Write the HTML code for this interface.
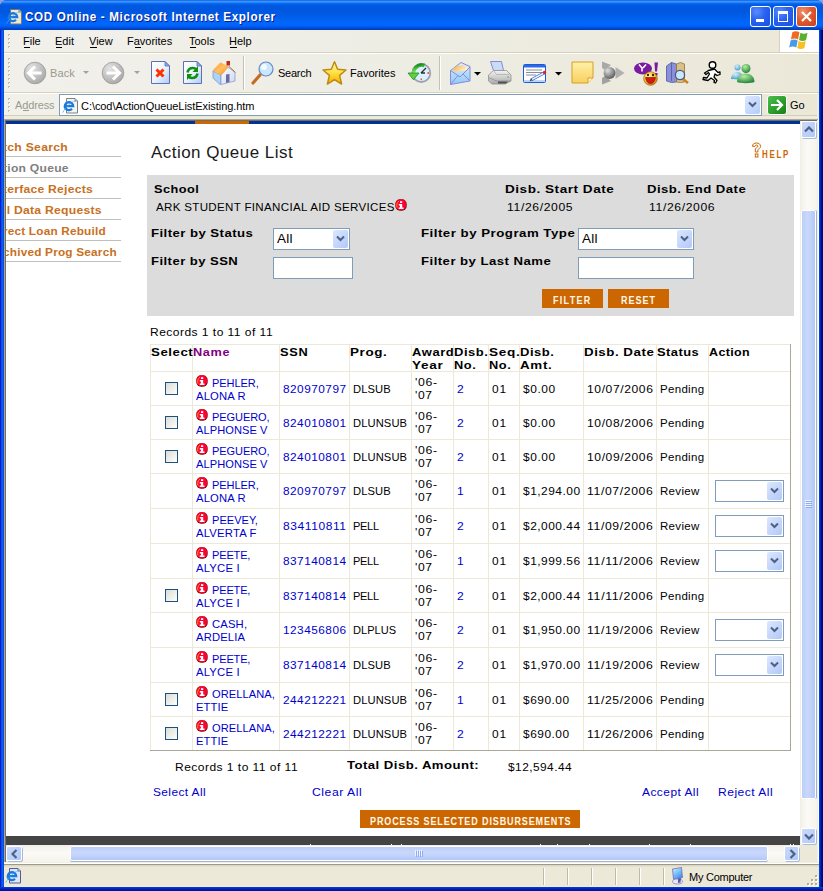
<!DOCTYPE html><html><head><meta charset="utf-8"><style>
html,body{margin:0;padding:0;}
body{width:823px;height:891px;overflow:hidden;position:relative;background:#8ca0e0;font-family:"Liberation Sans",sans-serif;}
.t{position:absolute;white-space:nowrap;line-height:20px;font-family:"Liberation Sans",sans-serif;}
.a{position:absolute;}
</style></head><body>
<div style="position:absolute;left:0px;top:0px;width:823px;height:891px;background:linear-gradient(to right,#0010d0 0,#0828d8 1px,#166ef0 2px,#0050e0 3px,#0050e0 819px,#0048f0 819px,#0038d8 820px,#001890 821px,#000880 822px);border-radius:7px 7px 0 0;"></div>
<div style="position:absolute;left:0px;top:0px;width:823px;height:30px;border-radius:7px 7px 0 0;background:linear-gradient(to bottom,#0046d8 0px,#3b95ff 1px,#3b95ff 2px,#0a74f8 3px,#0560e8 4px,#0058e0 6px,#0058e0 12px,#005ce8 16px,#0064f4 20px,#0066ff 24px,#0062f8 26px,#004ed8 28px,#0040c0 29px,#0040c0 30px);"></div>
<div style="position:absolute;left:0px;top:887px;width:823px;height:4px;background:linear-gradient(to bottom,#0040e0,#0020b8 2px,#000c90 4px);"></div>
<svg class="a" style="left:6px;top:8px" width="17" height="17" viewBox="0 0 17 17">
<path d="M4.5 1.5h8.5l2.5 2.5v12h-11z" fill="#ece9d8" stroke="#7a7866" stroke-width="1"/>
<path d="M13 1.5v2.5h2.5" fill="#b8d0f8" stroke="#7a7866" stroke-width="0.8"/>
<path d="M2.8 9.2H11.2A4.2 3.9 0 1 0 10 11.9" fill="none" stroke="#1a78e0" stroke-width="2.3"/>
<path d="M0.8 15.5c2.5-5 8-10 13-12" stroke="#38a8f0" stroke-width="1" fill="none" stroke-dasharray="1.5 0.8"/>
</svg>
<span class="t" style="left:25px;top:7px;font-size:13px;font-weight:bold;color:#fff;text-shadow:1px 1px 0 #0a1a90;letter-spacing:0.7px;transform:scaleX(0.9);transform-origin:0 0">COD Online - Microsoft Internet Explorer</span>
<div class="a" style="left:750px;top:6px;width:19px;height:19px;border:1px solid #fff;border-radius:3px;background:radial-gradient(circle at 30% 25%,#5a8cff 0,#2a62f0 45%,#1a4ee0 100%);overflow:hidden"><div class="a" style="left:5px;top:12px;width:8px;height:3px;background:#fff"></div></div>
<div class="a" style="left:773px;top:6px;width:19px;height:19px;border:1px solid #fff;border-radius:3px;background:radial-gradient(circle at 30% 25%,#5a8cff 0,#2a62f0 45%,#1a4ee0 100%);overflow:hidden"><div class="a" style="left:4px;top:4px;width:8px;height:7px;border:1px solid #fff;border-top:3px solid #fff"></div></div>
<div class="a" style="left:796px;top:6px;width:19px;height:19px;border:1px solid #fff;border-radius:3px;background:radial-gradient(circle at 30% 25%,#f09070 0,#e05a30 45%,#c8401a 100%);overflow:hidden"><svg class="a" style="left:0;top:0" width="19" height="19"><path d="M5 5L14 14M14 5L5 14" stroke="#fff" stroke-width="2.2"/></svg></div>
<div style="position:absolute;left:4px;top:30px;width:815px;height:22px;background:linear-gradient(to right,#f1f0eb 0,#eeede4 50%,#ebe8d8 100%);"></div>
<div style="position:absolute;left:4px;top:52px;width:815px;height:1px;background:#d8d0b8;"></div>
<div style="position:absolute;left:4px;top:53px;width:815px;height:1px;background:#ffffff;"></div>
<div style="position:absolute;left:780px;top:30px;width:39px;height:22px;background:#fff;"></div>
<div style="position:absolute;left:779px;top:30px;width:1px;height:22px;background:#d6d2c2;"></div>
<svg class="a" style="left:788px;top:30px" width="24" height="21" viewBox="0 0 22 19">
<path d="M4 2c2-1.2 4.5-1.2 6.5 0l-1.3 6.5c-2-1.2-4.5-1.2-6.5 0z" fill="#f06a22"/>
<path d="M11.4 2.5c2 1.2 4.5 1.2 6.5 0l-1.3 6.5c-2 1.2-4.5 1.2-6.5 0z" fill="#58b030"/>
<path d="M2.4 9.4c2-1.2 4.5-1.2 6.5 0l-1.3 6.5c-2-1.2-4.5-1.2-6.5 0z" fill="#4a9ae8"/>
<path d="M9.8 9.9c2 1.2 4.5 1.2 6.5 0l-1.3 6.5c-2 1.2-4.5 1.2-6.5 0z" fill="#f8c020"/>
</svg>
<div style="position:absolute;left:8px;top:34px;width:2px;height:2px;background:#c3bfae;"></div>
<div style="position:absolute;left:9px;top:35px;width:1px;height:1px;background:#fff;"></div>
<div style="position:absolute;left:8px;top:38px;width:2px;height:2px;background:#c3bfae;"></div>
<div style="position:absolute;left:9px;top:39px;width:1px;height:1px;background:#fff;"></div>
<div style="position:absolute;left:8px;top:42px;width:2px;height:2px;background:#c3bfae;"></div>
<div style="position:absolute;left:9px;top:43px;width:1px;height:1px;background:#fff;"></div>
<div style="position:absolute;left:8px;top:46px;width:2px;height:2px;background:#c3bfae;"></div>
<div style="position:absolute;left:9px;top:47px;width:1px;height:1px;background:#fff;"></div>
<span id="t0" class="t " style="left:23px;top:31px;font-size:11px;color:#000;letter-spacing:0.00px;">File</span>
<span id="t1" class="t " style="left:55px;top:31px;font-size:11px;color:#000;letter-spacing:0.00px;">Edit</span>
<span id="t2" class="t " style="left:89px;top:31px;font-size:11px;color:#000;letter-spacing:0.00px;">View</span>
<span id="t3" class="t " style="left:127px;top:31px;font-size:11px;color:#000;letter-spacing:0.00px;">Favorites</span>
<span id="t4" class="t " style="left:189px;top:31px;font-size:11px;color:#000;letter-spacing:0.00px;">Tools</span>
<span id="t5" class="t " style="left:229px;top:31px;font-size:11px;color:#000;letter-spacing:0.00px;">Help</span>
<div style="position:absolute;left:24px;top:47px;width:6px;height:1px;background:#000;"></div>
<div style="position:absolute;left:56px;top:47px;width:6px;height:1px;background:#000;"></div>
<div style="position:absolute;left:90px;top:47px;width:7px;height:1px;background:#000;"></div>
<div style="position:absolute;left:135px;top:47px;width:6px;height:1px;background:#000;"></div>
<div style="position:absolute;left:190px;top:47px;width:6px;height:1px;background:#000;"></div>
<div style="position:absolute;left:230px;top:47px;width:7px;height:1px;background:#000;"></div>
<div style="position:absolute;left:4px;top:54px;width:815px;height:38px;background:linear-gradient(to right,#f1f0eb 0,#eeede4 50%,#ebe8d8 100%);"></div>
<div style="position:absolute;left:4px;top:92px;width:815px;height:1px;background:#d8d0b8;"></div>
<div style="position:absolute;left:4px;top:93px;width:815px;height:1px;background:#fff;"></div>
<div style="position:absolute;left:8px;top:58px;width:2px;height:2px;background:#c3bfae;"></div>
<div style="position:absolute;left:9px;top:59px;width:1px;height:1px;background:#fff;"></div>
<div style="position:absolute;left:8px;top:62px;width:2px;height:2px;background:#c3bfae;"></div>
<div style="position:absolute;left:9px;top:63px;width:1px;height:1px;background:#fff;"></div>
<div style="position:absolute;left:8px;top:66px;width:2px;height:2px;background:#c3bfae;"></div>
<div style="position:absolute;left:9px;top:67px;width:1px;height:1px;background:#fff;"></div>
<div style="position:absolute;left:8px;top:70px;width:2px;height:2px;background:#c3bfae;"></div>
<div style="position:absolute;left:9px;top:71px;width:1px;height:1px;background:#fff;"></div>
<div style="position:absolute;left:8px;top:74px;width:2px;height:2px;background:#c3bfae;"></div>
<div style="position:absolute;left:9px;top:75px;width:1px;height:1px;background:#fff;"></div>
<div style="position:absolute;left:8px;top:78px;width:2px;height:2px;background:#c3bfae;"></div>
<div style="position:absolute;left:9px;top:79px;width:1px;height:1px;background:#fff;"></div>
<div style="position:absolute;left:8px;top:82px;width:2px;height:2px;background:#c3bfae;"></div>
<div style="position:absolute;left:9px;top:83px;width:1px;height:1px;background:#fff;"></div>
<div style="position:absolute;left:8px;top:86px;width:2px;height:2px;background:#c3bfae;"></div>
<div style="position:absolute;left:9px;top:87px;width:1px;height:1px;background:#fff;"></div>
<svg class="a" style="left:23px;top:61px" width="24" height="24" viewBox="0 0 24 24">
<defs><radialGradient id="gb" cx="35%" cy="30%" r="75%"><stop offset="0" stop-color="#e4e4e4"/><stop offset="0.6" stop-color="#c0c0c0"/><stop offset="1" stop-color="#a8a8a8"/></radialGradient></defs>
<circle cx="12" cy="12" r="10.8" fill="url(#gb)" stroke="#9a9a9a" stroke-width="0.8"/>
<path d="M6 12h12.5M12 5.5L5.5 12L12 18.5" stroke="#fff" stroke-width="3" fill="none" stroke-linejoin="miter"/>
</svg>
<svg class="a" style="left:101px;top:61px" width="24" height="24" viewBox="0 0 24 24">
<circle cx="12" cy="12" r="10.8" fill="url(#gb)" stroke="#9a9a9a" stroke-width="0.8"/>
<path d="M18 12H5.5M12 5.5L18.5 12L12 18.5" stroke="#fff" stroke-width="3" fill="none"/>
</svg>
<span id="t6" class="t " style="left:50px;top:63px;font-size:11px;color:#9c9a8c;letter-spacing:0.10px;">Back</span>
<svg class="a" style="left:83px;top:71px" width="6" height="4"><path d="M0 0h6L3 3z" fill="#a0a0a0"/></svg>
<svg class="a" style="left:134px;top:71px" width="6" height="4"><path d="M0 0h6L3 3z" fill="#a0a0a0"/></svg>
<svg class="a" style="left:151px;top:61px" width="20" height="24" viewBox="0 0 20 24">
<defs><linearGradient id="gd" x1="0" y1="0" x2="1" y2="1"><stop offset="0" stop-color="#ffffff"/><stop offset="0.5" stop-color="#eef4ff"/><stop offset="1" stop-color="#a8ccf8"/></linearGradient></defs>
<path d="M0.5 0.5h13.5l4.5 4.5v17.5h-18z" fill="url(#gd)" stroke="#6270b0" stroke-width="1"/><path d="M14 0.5v4.5h4.5z" fill="#7ab0f0" stroke="#6270b0" stroke-width="0.8"/><path d="M5.5 8.5L12.5 15.5M12.5 8.5L5.5 15.5" stroke="#ff3000" stroke-width="3"/></svg>
<svg class="a" style="left:183px;top:61px" width="20" height="24" viewBox="0 0 20 24">
<path d="M0.5 0.5h13.5l4.5 4.5v17.5h-18z" fill="url(#gd)" stroke="#6270b0" stroke-width="1"/><path d="M14 0.5v4.5h4.5z" fill="#7ab0f0" stroke="#6270b0" stroke-width="0.8"/><path d="M4.5 11.5c0.5-3 3-4.5 5.5-4.5c1.5 0 2.5 0.5 3.5 1.5" stroke="#109010" stroke-width="2.6" fill="none"/><path d="M15 5v6h-5.5z" fill="#109010"/>
<path d="M14.5 12.5c-0.5 3-3 4.5-5.5 4.5c-1.5 0-2.5-0.5-3.5-1.5" stroke="#109010" stroke-width="2.6" fill="none"/><path d="M4 19v-6h5.5z" fill="#109010"/></svg>
<svg class="a" style="left:208px;top:58px" width="32" height="30" viewBox="0 0 32 30">
<defs><linearGradient id="gr" x1="0" y1="0" x2="1" y2="1"><stop offset="0" stop-color="#ff9428"/><stop offset="0.5" stop-color="#ffc060"/><stop offset="1" stop-color="#f08a20"/></linearGradient>
<linearGradient id="gw" x1="0" y1="0" x2="1" y2="1"><stop offset="0" stop-color="#ffffff"/><stop offset="1" stop-color="#c8d8f0"/></linearGradient></defs>
<path d="M5 13L13 17L13 26L12 26.5L5 20z" fill="#a8d4fa" stroke="#7a8ac8" stroke-width="0.7"/>
<path d="M13 17L20 9L27 14.5L27 23L13 26.5z" fill="url(#gw)" stroke="#8a90c8" stroke-width="0.7"/>
<path d="M18 16.5L21.5 16L21.5 24L18 25z" fill="#6a6aa8"/>
<path d="M4.5 12.5L12.5 4.5L21 8.5L13 17.5z" fill="url(#gr)"/>
<path d="M21 8.5L27.5 14.5" stroke="#b07050" stroke-width="1"/>
<rect x="18.5" y="3" width="3.5" height="4.5" fill="#c02818"/>
</svg>
<div style="position:absolute;left:243px;top:56px;width:1px;height:34px;background:#c5c2b2;"></div>
<div style="position:absolute;left:244px;top:56px;width:1px;height:34px;background:#fff;"></div>
<svg class="a" style="left:250px;top:61px" width="26" height="24" viewBox="0 0 26 24">
<path d="M3 22L10 14" stroke="#c86a20" stroke-width="3.2" stroke-linecap="round"/>
<circle cx="16" cy="8" r="7" fill="#c8e8ff" stroke="#6a86c0" stroke-width="1.2"/>
<circle cx="14" cy="6" r="3" fill="#ffffff" opacity="0.8"/>
</svg>
<span id="t7" class="t " style="left:278px;top:63px;font-size:11px;color:#000;letter-spacing:-0.27px;">Search</span>
<svg class="a" style="left:321px;top:60px" width="27" height="26" viewBox="0 0 27 26">
<defs><linearGradient id="gs" x1="0" y1="0" x2="0" y2="1"><stop offset="0" stop-color="#fffcc0"/><stop offset="0.5" stop-color="#ffe040"/><stop offset="1" stop-color="#f0b000"/></linearGradient></defs>
<path d="M13.5 1.8L16.6 9.3L25 10L18.6 15.4L20.6 24L13.5 19.6L6.4 24L8.4 15.4L2 10L10.4 9.3z" fill="url(#gs)" stroke="#c08a10" stroke-width="1.5" stroke-linejoin="round"/>
</svg>
<span id="t8" class="t " style="left:350px;top:63px;font-size:11px;color:#000;letter-spacing:0.02px;transform:scaleX(1.0029);transform-origin:0 0;">Favorites</span>
<svg class="a" style="left:404px;top:58px" width="32" height="30" viewBox="404 58 32 30">
<defs><linearGradient id="gh" x1="0" y1="0" x2="0.3" y2="1"><stop offset="0" stop-color="#108a10"/><stop offset="1" stop-color="#90f070"/></linearGradient></defs>
<circle cx="421.3" cy="73" r="9" fill="#d8f0ff" stroke="#a0a0b0" stroke-width="1.8"/>
<path d="M421 73l5-5M421 73h4" stroke="#303030" stroke-width="1.4"/>
<rect x="427.5" y="72" width="1.4" height="2" fill="#f05020"/><rect x="420.6" y="78.5" width="1.4" height="1.6" fill="#f05020"/>
<path d="M424.5 65.5c-5-1.5-10 1-11 7" stroke="url(#gh)" stroke-width="3.6" fill="none"/>
<path d="M408 73h11l-5.5 6.8z" fill="#60d040" stroke="#108010" stroke-width="0.7"/>
</svg>
<div style="position:absolute;left:439px;top:56px;width:1px;height:34px;background:#c5c2b2;"></div>
<div style="position:absolute;left:440px;top:56px;width:1px;height:34px;background:#fff;"></div>
<svg class="a" style="left:444px;top:56px" width="32" height="32" viewBox="444 56 32 32">
<defs><linearGradient id="gm" x1="0" y1="0" x2="0" y2="1"><stop offset="0" stop-color="#d8f0ff"/><stop offset="1" stop-color="#90c8f8"/></linearGradient>
<linearGradient id="gl" x1="0" y1="0" x2="1" y2="0.4"><stop offset="0" stop-color="#f8b040"/><stop offset="1" stop-color="#fff0d0"/></linearGradient></defs>
<path d="M450.5 70.5L461 62.5L470 66.5L470 81L450.5 84.5z" fill="url(#gm)" stroke="#8a8ad8" stroke-width="1"/>
<path d="M453 68.5c3-3 10-4 15-1.5l-1 3c-4 1-10 1.5-13 1.5z" fill="url(#gl)"/>
<path d="M450.5 70.5L460 77L470 67M450.5 84.5L458 75.5M470 81L463 74" stroke="#8a8ad8" stroke-width="1" fill="none"/>
</svg>
<svg class="a" style="left:474px;top:72px" width="7" height="4"><path d="M0 0h7L3.5 3.5z" fill="#000"/></svg>
<svg class="a" style="left:486px;top:58px" width="28" height="30" viewBox="486 58 28 30">
<defs><linearGradient id="gp" x1="0" y1="0" x2="0" y2="1"><stop offset="0" stop-color="#f4f4f4"/><stop offset="1" stop-color="#a8a8a8"/></linearGradient></defs>
<path d="M490.5 61.5h11l2 9h-10z" fill="#c8dcf8" stroke="#8a8ad0" stroke-width="1"/>
<path d="M488.5 75l5-4.5h13l4.5 4.5v6l-6 3h-13l-3.5-3z" fill="url(#gp)" stroke="#909090" stroke-width="0.8"/>
<path d="M493.5 70.5l3 4h13" stroke="#b0b0b0" stroke-width="0.8" fill="none"/>
<path d="M488.5 77.5l8 3.5h14" stroke="#909090" stroke-width="0.8" fill="none"/>
<path d="M498 81.5h10l-2 2h-8z" fill="#505050"/><circle cx="508" cy="77" r="0.8" fill="#30c030"/>
</svg>
<svg class="a" style="left:518px;top:58px" width="32" height="30" viewBox="518 58 32 30">
<rect x="523.5" y="64.5" width="22" height="18" rx="1" fill="#fff" stroke="#1c5ad8" stroke-width="1"/>
<path d="M524 65h21v2.5h-21z" fill="#2a6ae8"/>
<path d="M524 80h21v2h-21z" fill="#b8d8f8"/>
<path d="M526 70h16M526 72.5h16M526 75h10" stroke="#8a8a9a" stroke-width="1"/>
<path d="M531 80l13-7" stroke="#1a5ad0" stroke-width="3"/><path d="M531 80l13-7" stroke="#e8f0ff" stroke-width="1.6"/>
<path d="M529.5 81.5l1.5-3l1.5 1.5z" fill="#403020"/><circle cx="544.5" cy="72.5" r="1.7" fill="#e02818"/>
</svg>
<svg class="a" style="left:555px;top:72px" width="7" height="4"><path d="M0 0h7L3.5 3.5z" fill="#000"/></svg>
<svg class="a" style="left:571px;top:61px" width="23" height="23" viewBox="0 0 23 23">
<defs><linearGradient id="gn" x1="0" y1="0" x2="0" y2="1"><stop offset="0" stop-color="#fff0a8"/><stop offset="1" stop-color="#f8d060"/></linearGradient></defs>
<path d="M1 1h21v16l-5 5h-16z" fill="url(#gn)" stroke="#d8a020" stroke-width="1"/>
<path d="M17 22v-5h5" fill="#fff8d0" stroke="#d8a020" stroke-width="1"/>
</svg>
<svg class="a" style="left:598px;top:58px" width="30" height="30" viewBox="598 58 30 30">
<defs><radialGradient id="gg2" cx="35%" cy="30%" r="70%"><stop offset="0" stop-color="#e0e0e0"/><stop offset="1" stop-color="#606060"/></radialGradient></defs>
<path d="M602 61.5l9 3.5l-6 5l-3-2z" fill="#a8a8a8"/><path d="M602 84.5l9-3.5l-6-5l-3 2z" fill="#a0a0a0"/>
<path d="M615.5 67l9 6l-9 6z" fill="#b0b0b0"/>
<circle cx="609.5" cy="73" r="6" fill="url(#gg2)"/>
</svg>
<svg class="a" style="left:628px;top:56px" width="132" height="34" viewBox="628 56 132 34">
<defs><radialGradient id="gy" cx="40%" cy="35%" r="65%"><stop offset="0" stop-color="#fff8a0"/><stop offset="0.6" stop-color="#f8c828"/><stop offset="1" stop-color="#d08810"/></radialGradient>
<radialGradient id="gmh" cx="40%" cy="30%" r="70%"><stop offset="0" stop-color="#b8f0a0"/><stop offset="1" stop-color="#288840"/></radialGradient>
<radialGradient id="gmh2" cx="40%" cy="30%" r="70%"><stop offset="0" stop-color="#d0f0ff"/><stop offset="1" stop-color="#4aa0c8"/></radialGradient></defs>
<ellipse cx="643" cy="68.5" rx="9" ry="6" fill="#7a1aa0"/>
<path d="M639 64.5l3 3.5v3.5M646 64.5l-3 3.5" stroke="#fff" stroke-width="1.6" fill="none"/>
<path d="M654.5 62.5h3.5l-1 9h-2z" fill="#7a1aa0"/><rect x="655" y="73" width="2.5" height="2.5" fill="#7a1aa0"/>
<circle cx="650.5" cy="78.5" r="6.8" fill="url(#gy)" stroke="#a06010" stroke-width="0.7"/>
<path d="M645.5 77.5q5 0 10 0q-1 6-5 6q-4 0-5-6z" fill="#d81818" stroke="#600" stroke-width="0.5"/>
<ellipse cx="648" cy="75" rx="0.9" ry="1.3" fill="#000"/><ellipse cx="653" cy="75" rx="0.9" ry="1.3" fill="#000"/>
<path d="M666.5 66l5-3.5l5 1.5v18l-5 0.5l-5-1.5z" fill="#8a90d8" stroke="#5058a0" stroke-width="0.8"/>
<path d="M671.5 62.5v18.5" stroke="#5a62b0" stroke-width="1"/>
<path d="M676.5 64l4-1.5l4 1.5v18l-4 0.5l-4-0.5z" fill="#d8c088" stroke="#907040" stroke-width="0.8"/>
<path d="M683 79l5 4" stroke="#d08020" stroke-width="2.6"/>
<circle cx="680" cy="75" r="4.6" fill="#c8e8ff" stroke="#505878" stroke-width="1.3"/>
<circle cx="712.5" cy="65" r="3.3" fill="#fff" stroke="#000" stroke-width="1.4"/>
<path d="M708.5 70.5l6-1.5l3.5 3.5l2 -0.5v2.5l-3 1l-2-1.5l-1 3l3 3.5l-1.5 2.5l-1.5-0.5l0.5-2l-3.5-2.5l-3 2.5l-5 -1l0.5-2l3.5 0.5l2.5-4l-1-1.5l-2.5 2l-1.5-1.5z" fill="#fff" stroke="#000" stroke-width="1.3" stroke-linejoin="round"/>
<circle cx="737.5" cy="67.5" r="3" fill="url(#gmh2)"/>
<path d="M731 79c0-4 3-7 6.5-7c2 0 3.5 1 4.5 2.5l-2 5z" fill="url(#gmh2)"/>
<circle cx="746" cy="68.5" r="4.5" fill="url(#gmh)"/>
<path d="M737 82c0-5 4-8.5 9-8.5s8.5 3.5 8.5 8.5c-2 1.5-15 1.5-17.5 0z" fill="url(#gmh)"/>
</svg>
<div style="position:absolute;left:4px;top:94px;width:815px;height:25px;background:linear-gradient(to right,#f1f0eb 0,#eeede4 50%,#ebe8d8 100%);"></div>
<div style="position:absolute;left:8px;top:98px;width:2px;height:2px;background:#c3bfae;"></div>
<div style="position:absolute;left:9px;top:99px;width:1px;height:1px;background:#fff;"></div>
<div style="position:absolute;left:8px;top:102px;width:2px;height:2px;background:#c3bfae;"></div>
<div style="position:absolute;left:9px;top:103px;width:1px;height:1px;background:#fff;"></div>
<div style="position:absolute;left:8px;top:106px;width:2px;height:2px;background:#c3bfae;"></div>
<div style="position:absolute;left:9px;top:107px;width:1px;height:1px;background:#fff;"></div>
<div style="position:absolute;left:8px;top:110px;width:2px;height:2px;background:#c3bfae;"></div>
<div style="position:absolute;left:9px;top:111px;width:1px;height:1px;background:#fff;"></div>
<span id="t9" class="t " style="left:15px;top:95px;font-size:11px;color:#9c9a8c;letter-spacing:-0.14px;">Address</span>
<div style="position:absolute;left:23px;top:110px;width:6px;height:1px;background:#9c9a8c;"></div>
<div style="position:absolute;left:4px;top:115px;width:815px;height:1px;background:#d2cebe;"></div>
<div style="position:absolute;left:4px;top:116px;width:815px;height:3px;background:#eeebdc;"></div>
<div style="position:absolute;left:59px;top:94px;width:703px;height:22px;background:#fff;border:1px solid #7f9db9;box-sizing:border-box;"></div>
<svg class="a" style="left:62px;top:97px" width="17" height="17" viewBox="0 0 17 17">
<path d="M4.5 1.5h8.5l2.5 2.5v12h-11z" fill="#f4f4f0" stroke="#808080" stroke-width="1"/>
<path d="M13 1.5v2.5h2.5" fill="#b8d0f8" stroke="#808080" stroke-width="0.8"/>
<path d="M2.8 9.2H11.2A4.2 3.9 0 1 0 10 11.9" fill="none" stroke="#1a78e0" stroke-width="2.3"/>
<path d="M0.8 15.5c2.5-5 8-10 13-12" stroke="#38a8f0" stroke-width="1" fill="none" stroke-dasharray="1.5 0.8"/>
</svg>
<span id="t10" class="t " style="left:81px;top:96px;font-size:11px;color:#000;letter-spacing:-0.06px;">C:\cod\ActionQueueListExisting.htm</span>
<div style="position:absolute;left:745px;top:96px;width:15px;height:18px;border-radius:2px;background:linear-gradient(135deg,#dce8ff,#b4ccf8);"></div>
<svg class="a" style="left:748px;top:101px" width="9" height="7"><path d="M1 1.5L4.5 5L8 1.5" stroke="#4d6185" stroke-width="2" fill="none"/></svg>
<svg class="a" style="left:767px;top:95px" width="20" height="20" viewBox="0 0 20 20">
<defs><linearGradient id="gg" x1="0" y1="0" x2="1" y2="1"><stop offset="0" stop-color="#50c050"/><stop offset="1" stop-color="#108010"/></linearGradient></defs>
<rect x="0.5" y="0.5" width="19" height="19" rx="2.5" fill="url(#gg)" stroke="#fff" stroke-width="1"/>
<path d="M4 10h11M10 5l5 5l-5 5" stroke="#fff" stroke-width="2.2" fill="none"/>
</svg>
<span id="t11" class="t " style="left:790px;top:95px;font-size:11px;color:#000;letter-spacing:0.00px;">Go</span>
<div style="position:absolute;left:817px;top:93px;width:2px;height:26px;background:#eeede5;"></div>
<div style="position:absolute;left:4px;top:119px;width:815px;height:1px;background:#aca899;"></div>
<div style="position:absolute;left:4px;top:120px;width:815px;height:1px;background:#716f64;"></div>
<div style="position:absolute;left:4px;top:119px;width:1px;height:745px;background:#aca899;"></div>
<div style="position:absolute;left:5px;top:120px;width:1px;height:743px;background:#716f64;"></div>
<div style="position:absolute;left:817px;top:120px;width:1px;height:744px;background:#f1efe2;"></div>
<div style="position:absolute;left:818px;top:119px;width:1px;height:745px;background:#fff;"></div>
<div style="position:absolute;left:4px;top:862px;width:815px;height:1px;background:#f1efe2;"></div>
<div style="position:absolute;left:4px;top:863px;width:815px;height:1px;background:#fff;"></div>
<div style="position:absolute;left:6px;top:121px;width:794px;height:724px;background:#fff;"></div>
<div style="position:absolute;left:6px;top:121px;width:794px;height:3px;background:#003399;"></div>
<div style="position:absolute;left:195px;top:121px;width:54px;height:3px;background:#cc6600;"></div>
<div class="a" style="left:6px;top:121px;width:140px;height:200px;overflow:hidden">
<span id="t12" class="t " style="left:-3px;top:16px;font-size:11px;color:#c8701e;font-weight:bold;letter-spacing:0.25px;transform:scaleX(1.1055);transform-origin:0 0;">tch Search</span>
<span id="t13" class="t " style="left:-3px;top:37px;font-size:11px;color:#808080;font-weight:bold;letter-spacing:0.24px;transform:scaleX(1.1007);transform-origin:0 0;">tion Queue</span>
<span id="t14" class="t " style="left:-3px;top:58px;font-size:11px;color:#c8701e;font-weight:bold;letter-spacing:0.22px;transform:scaleX(1.1023);transform-origin:0 0;">terface Rejects</span>
<span id="t15" class="t " style="left:-3px;top:79px;font-size:11px;color:#c8701e;font-weight:bold;letter-spacing:0.23px;transform:scaleX(1.1074);transform-origin:0 0;">ll Data Requests</span>
<span id="t16" class="t " style="left:-3px;top:100px;font-size:11px;color:#c8701e;font-weight:bold;letter-spacing:0.17px;transform:scaleX(1.0735);transform-origin:0 0;">rect Loan Rebuild</span>
<span id="t17" class="t " style="left:-3px;top:121px;font-size:11px;color:#c8701e;font-weight:bold;letter-spacing:0.18px;transform:scaleX(1.0746);transform-origin:0 0;">chived Prog Search</span>
<div style="position:absolute;left:0px;top:35px;width:115px;height:1px;background:#c0c0c0;"></div>
<div style="position:absolute;left:0px;top:56px;width:115px;height:1px;background:#c0c0c0;"></div>
<div style="position:absolute;left:0px;top:77px;width:115px;height:1px;background:#c0c0c0;"></div>
<div style="position:absolute;left:0px;top:98px;width:115px;height:1px;background:#c0c0c0;"></div>
<div style="position:absolute;left:0px;top:119px;width:115px;height:1px;background:#c0c0c0;"></div>
<div style="position:absolute;left:0px;top:140px;width:115px;height:1px;background:#c0c0c0;"></div>
</div>
<span id="t18" class="t " style="left:151px;top:143px;font-size:16px;color:#1a1a1a;letter-spacing:0.45px;transform:scaleX(1.0609);transform-origin:0 0;">Action Queue List</span>
<svg class="a" style="left:751px;top:142px" width="12" height="17" viewBox="0 0 12 17">
<path d="M1.5 4.3c0-2.2 1.8-3.3 4-3.3s4 1.1 4 3.3c0 2-1.8 2.6-2.6 3.4v2.3h-2.6v-3.2c0.8-1 2.6-1.4 2.6-2.6c0-0.8-0.6-1.2-1.4-1.2s-1.4 0.5-1.4 1.3z" fill="none" stroke="#cc6600" stroke-width="1"/>
<rect x="4.3" y="12" width="2.6" height="3" fill="none" stroke="#cc6600" stroke-width="1"/>
</svg>
<span class="t" style="left:762px;top:144px;font-size:11px;font-weight:bold;color:#cc6600;letter-spacing:2.4px;transform:scaleX(0.72);transform-origin:0 0">HELP</span>
<div style="position:absolute;left:147px;top:175px;width:647px;height:141px;background:#dcdcdc;"></div>
<span id="t19" class="t " style="left:154px;top:179px;font-size:11px;color:#000;font-weight:bold;letter-spacing:0.41px;transform:scaleX(1.1558);transform-origin:0 0;">School</span>
<span id="t20" class="t " style="left:156px;top:197px;font-size:11px;color:#000;letter-spacing:0.31px;transform:scaleX(1.0504);transform-origin:0 0;">ARK STUDENT FINANCIAL AID SERVICES</span>
<svg class="a" style="left:395px;top:199px" width="12" height="12" viewBox="0 0 12 12">
<rect x="0.3" y="0.3" width="11.4" height="11.4" rx="4.6" fill="#7a0a08"/>
<rect x="0.6" y="0.6" width="10.4" height="10.4" rx="4.2" fill="#ff0030"/>
<path d="M2 8.5c-0.8-2.5 0-5 2-6.5" stroke="#ff9020" stroke-width="1" fill="none"/>
<rect x="5" y="2.2" width="2.2" height="1.8" fill="#fff"/><path d="M3.8 5h3.4v3.4h1.3v1.6h-4.8v-1.6h1.2v-1.8h-1.1z" fill="#fff"/>
</svg>
<span id="t21" class="t " style="left:505px;top:179px;font-size:11px;color:#000;font-weight:bold;letter-spacing:0.43px;transform:scaleX(1.2313);transform-origin:0 0;">Disb. Start Date</span>
<span id="t22" class="t " style="left:647px;top:179px;font-size:11px;color:#000;font-weight:bold;letter-spacing:0.40px;transform:scaleX(1.1920);transform-origin:0 0;">Disb. End Date</span>
<span id="t23" class="t " style="left:507px;top:197px;font-size:11px;color:#000;letter-spacing:0.56px;transform:scaleX(1.1066);transform-origin:0 0;">11/26/2005</span>
<span id="t24" class="t " style="left:649px;top:197px;font-size:11px;color:#000;letter-spacing:0.56px;transform:scaleX(1.1066);transform-origin:0 0;">11/26/2006</span>
<span id="t25" class="t " style="left:151px;top:223px;font-size:11px;color:#000;font-weight:bold;letter-spacing:0.37px;transform:scaleX(1.1978);transform-origin:0 0;">Filter by Status</span>
<span id="t26" class="t " style="left:151px;top:251px;font-size:11px;color:#000;font-weight:bold;letter-spacing:0.38px;transform:scaleX(1.1885);transform-origin:0 0;">Filter by SSN</span>
<span id="t27" class="t " style="left:421px;top:223px;font-size:11px;color:#000;font-weight:bold;letter-spacing:0.41px;transform:scaleX(1.2055);transform-origin:0 0;">Filter by Program Type</span>
<span id="t28" class="t " style="left:421px;top:251px;font-size:11px;color:#000;font-weight:bold;letter-spacing:0.39px;transform:scaleX(1.1961);transform-origin:0 0;">Filter by Last Name</span>
<div style="position:absolute;left:273px;top:228px;width:77px;height:22px;background:#fff;border:1px solid #7f9db9;box-sizing:border-box;"></div>
<div style="position:absolute;left:333px;top:230px;width:15px;height:18px;border-radius:2px;background:linear-gradient(135deg,#dde8fe 0%,#c2d4fb 60%,#b4c8f6 100%);"></div>
<svg class="a" style="left:336px;top:235px" width="9" height="7"><path d="M1 1.5L4.5 5L8 1.5" stroke="#4d6185" stroke-width="2" fill="none"/></svg>
<span id="t29" class="t " style="left:277px;top:229px;font-size:13px;color:#000;letter-spacing:0.25px;transform:scaleX(1.0404);transform-origin:0 0;">All</span>
<div style="position:absolute;left:273px;top:257px;width:80px;height:22px;background:#fff;border:1px solid #7f9db9;box-sizing:border-box;"></div>
<div style="position:absolute;left:578px;top:228px;width:116px;height:22px;background:#fff;border:1px solid #7f9db9;box-sizing:border-box;"></div>
<div style="position:absolute;left:677px;top:230px;width:15px;height:18px;border-radius:2px;background:linear-gradient(135deg,#dde8fe 0%,#c2d4fb 60%,#b4c8f6 100%);"></div>
<svg class="a" style="left:680px;top:235px" width="9" height="7"><path d="M1 1.5L4.5 5L8 1.5" stroke="#4d6185" stroke-width="2" fill="none"/></svg>
<span id="t30" class="t " style="left:582px;top:229px;font-size:13px;color:#000;letter-spacing:0.25px;transform:scaleX(1.0404);transform-origin:0 0;">All</span>
<div style="position:absolute;left:578px;top:257px;width:116px;height:22px;background:#fff;border:1px solid #7f9db9;box-sizing:border-box;"></div>
<div style="position:absolute;left:542px;top:289px;width:61px;height:19px;background:#cc6600;"></div>
<div style="position:absolute;left:608px;top:289px;width:61px;height:19px;background:#cc6600;"></div>
<span class="t" style="left:553px;top:291px;font-size:10px;font-weight:bold;color:#fff8e8;letter-spacing:1.45px;transform:scaleX(0.9);transform-origin:0 0">FILTER</span>
<span class="t" style="left:621px;top:291px;font-size:10px;font-weight:bold;color:#fff8e8;letter-spacing:1.1px;transform:scaleX(0.9);transform-origin:0 0">RESET</span>
<span id="t31" class="t " style="left:150px;top:322px;font-size:11px;color:#000;letter-spacing:0.43px;transform:scaleX(1.0929);transform-origin:0 0;">Records 1 to 11 of 11</span>
<div style="position:absolute;left:150px;top:344px;width:640px;height:1px;background:#ece9d8;"></div>
<div style="position:absolute;left:150px;top:344px;width:1px;height:406px;background:#ece9d8;"></div>
<div style="position:absolute;left:790px;top:344px;width:1px;height:407px;background:#aca899;"></div>
<div style="position:absolute;left:150px;top:750px;width:641px;height:1px;background:#aca899;"></div>
<div style="position:absolute;left:192px;top:345px;width:1px;height:405px;background:#ece9d8;"></div>
<div style="position:absolute;left:279px;top:345px;width:1px;height:405px;background:#ece9d8;"></div>
<div style="position:absolute;left:349px;top:345px;width:1px;height:405px;background:#ece9d8;"></div>
<div style="position:absolute;left:411px;top:345px;width:1px;height:405px;background:#ece9d8;"></div>
<div style="position:absolute;left:453px;top:345px;width:1px;height:405px;background:#ece9d8;"></div>
<div style="position:absolute;left:488px;top:345px;width:1px;height:405px;background:#ece9d8;"></div>
<div style="position:absolute;left:519px;top:345px;width:1px;height:405px;background:#ece9d8;"></div>
<div style="position:absolute;left:583px;top:345px;width:1px;height:405px;background:#ece9d8;"></div>
<div style="position:absolute;left:656px;top:345px;width:1px;height:405px;background:#ece9d8;"></div>
<div style="position:absolute;left:708px;top:345px;width:1px;height:405px;background:#ece9d8;"></div>
<div style="position:absolute;left:151px;top:371px;width:639px;height:1px;background:#ece9d8;"></div>
<div style="position:absolute;left:151px;top:405px;width:639px;height:1px;background:#ece9d8;"></div>
<div style="position:absolute;left:151px;top:439px;width:639px;height:1px;background:#ece9d8;"></div>
<div style="position:absolute;left:151px;top:473px;width:639px;height:1px;background:#ece9d8;"></div>
<div style="position:absolute;left:151px;top:508px;width:639px;height:1px;background:#ece9d8;"></div>
<div style="position:absolute;left:151px;top:543px;width:639px;height:1px;background:#ece9d8;"></div>
<div style="position:absolute;left:151px;top:578px;width:639px;height:1px;background:#ece9d8;"></div>
<div style="position:absolute;left:151px;top:612px;width:639px;height:1px;background:#ece9d8;"></div>
<div style="position:absolute;left:151px;top:647px;width:639px;height:1px;background:#ece9d8;"></div>
<div style="position:absolute;left:151px;top:682px;width:639px;height:1px;background:#ece9d8;"></div>
<div style="position:absolute;left:151px;top:716px;width:639px;height:1px;background:#ece9d8;"></div>
<span id="t32" class="t " style="left:151px;top:342px;font-size:11px;color:#000;font-weight:bold;letter-spacing:0.45px;transform:scaleX(1.2055);transform-origin:0 0;">Select</span>
<span id="t33" class="t " style="left:193px;top:342px;font-size:11px;color:#800080;font-weight:bold;letter-spacing:0.56px;transform:scaleX(1.1606);transform-origin:0 0;">Name</span>
<span id="t34" class="t " style="left:280px;top:342px;font-size:11px;color:#000;font-weight:bold;letter-spacing:0.63px;transform:scaleX(1.1615);transform-origin:0 0;">SSN</span>
<span id="t35" class="t " style="left:350px;top:342px;font-size:11px;color:#000;font-weight:bold;letter-spacing:0.51px;transform:scaleX(1.2202);transform-origin:0 0;">Prog.</span>
<span id="t36" class="t " style="left:412px;top:342px;font-size:11px;color:#000;font-weight:bold;letter-spacing:0.51px;transform:scaleX(1.1771);transform-origin:0 0;">Award</span>
<span id="t37" class="t " style="left:412px;top:355px;font-size:11px;color:#000;font-weight:bold;letter-spacing:0.59px;transform:scaleX(1.2333);transform-origin:0 0;">Year</span>
<span id="t38" class="t " style="left:454px;top:342px;font-size:11px;color:#000;font-weight:bold;letter-spacing:0.42px;transform:scaleX(1.1817);transform-origin:0 0;">Disb.</span>
<span id="t39" class="t " style="left:454px;top:355px;font-size:11px;color:#000;font-weight:bold;letter-spacing:0.49px;transform:scaleX(1.1624);transform-origin:0 0;">No.</span>
<span id="t40" class="t " style="left:489px;top:342px;font-size:11px;color:#000;font-weight:bold;letter-spacing:0.59px;transform:scaleX(1.2340);transform-origin:0 0;">Seq.</span>
<span id="t41" class="t " style="left:489px;top:355px;font-size:11px;color:#000;font-weight:bold;letter-spacing:0.49px;transform:scaleX(1.1624);transform-origin:0 0;">No.</span>
<span id="t42" class="t " style="left:520px;top:342px;font-size:11px;color:#000;font-weight:bold;letter-spacing:0.42px;transform:scaleX(1.1817);transform-origin:0 0;">Disb.</span>
<span id="t43" class="t " style="left:520px;top:355px;font-size:11px;color:#000;font-weight:bold;letter-spacing:0.58px;transform:scaleX(1.2149);transform-origin:0 0;">Amt.</span>
<span id="t44" class="t " style="left:584px;top:342px;font-size:11px;color:#000;font-weight:bold;letter-spacing:0.43px;transform:scaleX(1.2102);transform-origin:0 0;">Disb. Date</span>
<span id="t45" class="t " style="left:657px;top:342px;font-size:11px;color:#000;font-weight:bold;letter-spacing:0.40px;transform:scaleX(1.1716);transform-origin:0 0;">Status</span>
<span id="t46" class="t " style="left:709px;top:342px;font-size:11px;color:#000;font-weight:bold;letter-spacing:0.33px;transform:scaleX(1.1340);transform-origin:0 0;">Action</span>
<div style="position:absolute;left:165px;top:382px;width:13px;height:13px;border:1px solid #1c5180;box-sizing:border-box;background:linear-gradient(135deg,#dcdcd7 0%,#f4f4f0 70%,#fff 100%);"></div>
<svg class="a" style="left:196px;top:375px" width="12" height="12" viewBox="0 0 12 12">
<rect x="0.3" y="0.3" width="11.4" height="11.4" rx="4.6" fill="#7a0a08"/>
<rect x="0.6" y="0.6" width="10.4" height="10.4" rx="4.2" fill="#ff0030"/>
<path d="M2 8.5c-0.8-2.5 0-5 2-6.5" stroke="#ff9020" stroke-width="1" fill="none"/>
<rect x="5" y="2.2" width="2.2" height="1.8" fill="#fff"/><path d="M3.8 5h3.4v3.4h1.3v1.6h-4.8v-1.6h1.2v-1.8h-1.1z" fill="#fff"/>
</svg>
<span id="t47" class="t " style="left:212px;top:373px;font-size:11px;color:#0000cc;letter-spacing:-0.04px;">PEHLER,</span>
<span id="t48" class="t " style="left:196px;top:386px;font-size:11px;color:#0000cc;letter-spacing:0.16px;transform:scaleX(1.0212);transform-origin:0 0;">ALONA R</span>
<span id="t49" class="t " style="left:283px;top:379px;font-size:11px;color:#0000cc;letter-spacing:0.46px;transform:scaleX(1.0735);transform-origin:0 0;">820970797</span>
<span id="t50" class="t " style="left:353px;top:379px;font-size:11px;color:#000;letter-spacing:0.13px;transform:scaleX(1.0152);transform-origin:0 0;">DLSUB</span>
<span id="t51" class="t " style="left:415px;top:372px;font-size:11px;color:#000;letter-spacing:0.58px;transform:scaleX(1.1173);transform-origin:0 0;">'06-</span>
<span id="t52" class="t " style="left:415px;top:385px;font-size:11px;color:#000;letter-spacing:0.59px;transform:scaleX(1.1015);transform-origin:0 0;">'07</span>
<span id="t53" class="t " style="left:457px;top:379px;font-size:11px;color:#0000cc;letter-spacing:0.40px;transform:scaleX(1.0939);transform-origin:0 0;">2</span>
<span id="t54" class="t " style="left:492px;top:379px;font-size:11px;color:#000;letter-spacing:0.80px;transform:scaleX(1.0808);transform-origin:0 0;">01</span>
<span id="t55" class="t " style="left:523px;top:379px;font-size:11px;color:#000;letter-spacing:0.51px;transform:scaleX(1.0853);transform-origin:0 0;">$0.00</span>
<span id="t56" class="t " style="left:587px;top:379px;font-size:11px;color:#000;letter-spacing:0.54px;transform:scaleX(1.0994);transform-origin:0 0;">10/07/2006</span>
<span id="t57" class="t " style="left:660px;top:379px;font-size:11px;color:#000;letter-spacing:0.29px;transform:scaleX(1.0463);transform-origin:0 0;">Pending</span>
<div style="position:absolute;left:165px;top:416px;width:13px;height:13px;border:1px solid #1c5180;box-sizing:border-box;background:linear-gradient(135deg,#dcdcd7 0%,#f4f4f0 70%,#fff 100%);"></div>
<svg class="a" style="left:196px;top:409px" width="12" height="12" viewBox="0 0 12 12">
<rect x="0.3" y="0.3" width="11.4" height="11.4" rx="4.6" fill="#7a0a08"/>
<rect x="0.6" y="0.6" width="10.4" height="10.4" rx="4.2" fill="#ff0030"/>
<path d="M2 8.5c-0.8-2.5 0-5 2-6.5" stroke="#ff9020" stroke-width="1" fill="none"/>
<rect x="5" y="2.2" width="2.2" height="1.8" fill="#fff"/><path d="M3.8 5h3.4v3.4h1.3v1.6h-4.8v-1.6h1.2v-1.8h-1.1z" fill="#fff"/>
</svg>
<span id="t58" class="t " style="left:212px;top:407px;font-size:11px;color:#0000cc;letter-spacing:-0.06px;">PEGUERO,</span>
<span id="t59" class="t " style="left:196px;top:420px;font-size:11px;color:#0000cc;letter-spacing:0.06px;transform:scaleX(1.0084);transform-origin:0 0;">ALPHONSE V</span>
<span id="t60" class="t " style="left:283px;top:413px;font-size:11px;color:#0000cc;letter-spacing:0.46px;transform:scaleX(1.0735);transform-origin:0 0;">824010801</span>
<span id="t61" class="t " style="left:353px;top:413px;font-size:11px;color:#000;letter-spacing:0.12px;transform:scaleX(1.0143);transform-origin:0 0;">DLUNSUB</span>
<span id="t62" class="t " style="left:415px;top:406px;font-size:11px;color:#000;letter-spacing:0.58px;transform:scaleX(1.1173);transform-origin:0 0;">'06-</span>
<span id="t63" class="t " style="left:415px;top:419px;font-size:11px;color:#000;letter-spacing:0.59px;transform:scaleX(1.1015);transform-origin:0 0;">'07</span>
<span id="t64" class="t " style="left:457px;top:413px;font-size:11px;color:#0000cc;letter-spacing:0.40px;transform:scaleX(1.0939);transform-origin:0 0;">2</span>
<span id="t65" class="t " style="left:492px;top:413px;font-size:11px;color:#000;letter-spacing:0.80px;transform:scaleX(1.0808);transform-origin:0 0;">01</span>
<span id="t66" class="t " style="left:523px;top:413px;font-size:11px;color:#000;letter-spacing:0.51px;transform:scaleX(1.0853);transform-origin:0 0;">$0.00</span>
<span id="t67" class="t " style="left:587px;top:413px;font-size:11px;color:#000;letter-spacing:0.54px;transform:scaleX(1.0994);transform-origin:0 0;">10/08/2006</span>
<span id="t68" class="t " style="left:660px;top:413px;font-size:11px;color:#000;letter-spacing:0.29px;transform:scaleX(1.0463);transform-origin:0 0;">Pending</span>
<div style="position:absolute;left:165px;top:450px;width:13px;height:13px;border:1px solid #1c5180;box-sizing:border-box;background:linear-gradient(135deg,#dcdcd7 0%,#f4f4f0 70%,#fff 100%);"></div>
<svg class="a" style="left:196px;top:443px" width="12" height="12" viewBox="0 0 12 12">
<rect x="0.3" y="0.3" width="11.4" height="11.4" rx="4.6" fill="#7a0a08"/>
<rect x="0.6" y="0.6" width="10.4" height="10.4" rx="4.2" fill="#ff0030"/>
<path d="M2 8.5c-0.8-2.5 0-5 2-6.5" stroke="#ff9020" stroke-width="1" fill="none"/>
<rect x="5" y="2.2" width="2.2" height="1.8" fill="#fff"/><path d="M3.8 5h3.4v3.4h1.3v1.6h-4.8v-1.6h1.2v-1.8h-1.1z" fill="#fff"/>
</svg>
<span id="t69" class="t " style="left:212px;top:441px;font-size:11px;color:#0000cc;letter-spacing:-0.06px;">PEGUERO,</span>
<span id="t70" class="t " style="left:196px;top:454px;font-size:11px;color:#0000cc;letter-spacing:0.06px;transform:scaleX(1.0084);transform-origin:0 0;">ALPHONSE V</span>
<span id="t71" class="t " style="left:283px;top:447px;font-size:11px;color:#0000cc;letter-spacing:0.46px;transform:scaleX(1.0735);transform-origin:0 0;">824010801</span>
<span id="t72" class="t " style="left:353px;top:447px;font-size:11px;color:#000;letter-spacing:0.12px;transform:scaleX(1.0143);transform-origin:0 0;">DLUNSUB</span>
<span id="t73" class="t " style="left:415px;top:440px;font-size:11px;color:#000;letter-spacing:0.58px;transform:scaleX(1.1173);transform-origin:0 0;">'06-</span>
<span id="t74" class="t " style="left:415px;top:453px;font-size:11px;color:#000;letter-spacing:0.59px;transform:scaleX(1.1015);transform-origin:0 0;">'07</span>
<span id="t75" class="t " style="left:457px;top:447px;font-size:11px;color:#0000cc;letter-spacing:0.40px;transform:scaleX(1.0939);transform-origin:0 0;">2</span>
<span id="t76" class="t " style="left:492px;top:447px;font-size:11px;color:#000;letter-spacing:0.80px;transform:scaleX(1.0808);transform-origin:0 0;">01</span>
<span id="t77" class="t " style="left:523px;top:447px;font-size:11px;color:#000;letter-spacing:0.51px;transform:scaleX(1.0853);transform-origin:0 0;">$0.00</span>
<span id="t78" class="t " style="left:587px;top:447px;font-size:11px;color:#000;letter-spacing:0.54px;transform:scaleX(1.0994);transform-origin:0 0;">10/09/2006</span>
<span id="t79" class="t " style="left:660px;top:447px;font-size:11px;color:#000;letter-spacing:0.29px;transform:scaleX(1.0463);transform-origin:0 0;">Pending</span>
<svg class="a" style="left:196px;top:477px" width="12" height="12" viewBox="0 0 12 12">
<rect x="0.3" y="0.3" width="11.4" height="11.4" rx="4.6" fill="#7a0a08"/>
<rect x="0.6" y="0.6" width="10.4" height="10.4" rx="4.2" fill="#ff0030"/>
<path d="M2 8.5c-0.8-2.5 0-5 2-6.5" stroke="#ff9020" stroke-width="1" fill="none"/>
<rect x="5" y="2.2" width="2.2" height="1.8" fill="#fff"/><path d="M3.8 5h3.4v3.4h1.3v1.6h-4.8v-1.6h1.2v-1.8h-1.1z" fill="#fff"/>
</svg>
<span id="t80" class="t " style="left:212px;top:475px;font-size:11px;color:#0000cc;letter-spacing:-0.04px;">PEHLER,</span>
<span id="t81" class="t " style="left:196px;top:488px;font-size:11px;color:#0000cc;letter-spacing:0.16px;transform:scaleX(1.0212);transform-origin:0 0;">ALONA R</span>
<span id="t82" class="t " style="left:283px;top:481px;font-size:11px;color:#0000cc;letter-spacing:0.46px;transform:scaleX(1.0735);transform-origin:0 0;">820970797</span>
<span id="t83" class="t " style="left:353px;top:481px;font-size:11px;color:#000;letter-spacing:0.13px;transform:scaleX(1.0152);transform-origin:0 0;">DLSUB</span>
<span id="t84" class="t " style="left:415px;top:474px;font-size:11px;color:#000;letter-spacing:0.58px;transform:scaleX(1.1173);transform-origin:0 0;">'06-</span>
<span id="t85" class="t " style="left:415px;top:487px;font-size:11px;color:#000;letter-spacing:0.59px;transform:scaleX(1.1015);transform-origin:0 0;">'07</span>
<span id="t86" class="t " style="left:457px;top:481px;font-size:11px;color:#0000cc;letter-spacing:0.40px;transform:scaleX(1.0939);transform-origin:0 0;">1</span>
<span id="t87" class="t " style="left:492px;top:481px;font-size:11px;color:#000;letter-spacing:0.80px;transform:scaleX(1.0808);transform-origin:0 0;">01</span>
<span id="t88" class="t " style="left:523px;top:481px;font-size:11px;color:#000;letter-spacing:0.46px;transform:scaleX(1.0845);transform-origin:0 0;">$1,294.00</span>
<span id="t89" class="t " style="left:587px;top:481px;font-size:11px;color:#000;letter-spacing:0.57px;transform:scaleX(1.1086);transform-origin:0 0;">11/07/2006</span>
<span id="t90" class="t " style="left:660px;top:481px;font-size:11px;color:#000;letter-spacing:0.30px;transform:scaleX(1.0460);transform-origin:0 0;">Review</span>
<div style="position:absolute;left:715px;top:480px;width:69px;height:22px;background:#fff;border:1px solid #7f9db9;box-sizing:border-box;"></div>
<div style="position:absolute;left:767px;top:482px;width:15px;height:18px;border-radius:2px;background:linear-gradient(135deg,#dde8fe 0%,#c2d4fb 60%,#b4c8f6 100%);"></div>
<svg class="a" style="left:770px;top:487px" width="9" height="7"><path d="M1 1.5L4.5 5L8 1.5" stroke="#4d6185" stroke-width="2" fill="none"/></svg>
<svg class="a" style="left:196px;top:512px" width="12" height="12" viewBox="0 0 12 12">
<rect x="0.3" y="0.3" width="11.4" height="11.4" rx="4.6" fill="#7a0a08"/>
<rect x="0.6" y="0.6" width="10.4" height="10.4" rx="4.2" fill="#ff0030"/>
<path d="M2 8.5c-0.8-2.5 0-5 2-6.5" stroke="#ff9020" stroke-width="1" fill="none"/>
<rect x="5" y="2.2" width="2.2" height="1.8" fill="#fff"/><path d="M3.8 5h3.4v3.4h1.3v1.6h-4.8v-1.6h1.2v-1.8h-1.1z" fill="#fff"/>
</svg>
<span id="t91" class="t " style="left:212px;top:510px;font-size:11px;color:#0000cc;letter-spacing:0.02px;transform:scaleX(1.0029);transform-origin:0 0;">PEEVEY,</span>
<span id="t92" class="t " style="left:196px;top:523px;font-size:11px;color:#0000cc;letter-spacing:0.18px;transform:scaleX(1.0260);transform-origin:0 0;">ALVERTA F</span>
<span id="t93" class="t " style="left:283px;top:516px;font-size:11px;color:#0000cc;letter-spacing:0.54px;transform:scaleX(1.0915);transform-origin:0 0;">834110811</span>
<span id="t94" class="t " style="left:353px;top:516px;font-size:11px;color:#000;letter-spacing:-0.29px;">PELL</span>
<span id="t95" class="t " style="left:415px;top:509px;font-size:11px;color:#000;letter-spacing:0.58px;transform:scaleX(1.1173);transform-origin:0 0;">'06-</span>
<span id="t96" class="t " style="left:415px;top:522px;font-size:11px;color:#000;letter-spacing:0.59px;transform:scaleX(1.1015);transform-origin:0 0;">'07</span>
<span id="t97" class="t " style="left:457px;top:516px;font-size:11px;color:#0000cc;letter-spacing:0.40px;transform:scaleX(1.0939);transform-origin:0 0;">2</span>
<span id="t98" class="t " style="left:492px;top:516px;font-size:11px;color:#000;letter-spacing:0.80px;transform:scaleX(1.0808);transform-origin:0 0;">01</span>
<span id="t99" class="t " style="left:523px;top:516px;font-size:11px;color:#000;letter-spacing:0.46px;transform:scaleX(1.0845);transform-origin:0 0;">$2,000.44</span>
<span id="t100" class="t " style="left:587px;top:516px;font-size:11px;color:#000;letter-spacing:0.57px;transform:scaleX(1.1086);transform-origin:0 0;">11/09/2006</span>
<span id="t101" class="t " style="left:660px;top:516px;font-size:11px;color:#000;letter-spacing:0.30px;transform:scaleX(1.0460);transform-origin:0 0;">Review</span>
<div style="position:absolute;left:715px;top:515px;width:69px;height:22px;background:#fff;border:1px solid #7f9db9;box-sizing:border-box;"></div>
<div style="position:absolute;left:767px;top:517px;width:15px;height:18px;border-radius:2px;background:linear-gradient(135deg,#dde8fe 0%,#c2d4fb 60%,#b4c8f6 100%);"></div>
<svg class="a" style="left:770px;top:522px" width="9" height="7"><path d="M1 1.5L4.5 5L8 1.5" stroke="#4d6185" stroke-width="2" fill="none"/></svg>
<svg class="a" style="left:196px;top:547px" width="12" height="12" viewBox="0 0 12 12">
<rect x="0.3" y="0.3" width="11.4" height="11.4" rx="4.6" fill="#7a0a08"/>
<rect x="0.6" y="0.6" width="10.4" height="10.4" rx="4.2" fill="#ff0030"/>
<path d="M2 8.5c-0.8-2.5 0-5 2-6.5" stroke="#ff9020" stroke-width="1" fill="none"/>
<rect x="5" y="2.2" width="2.2" height="1.8" fill="#fff"/><path d="M3.8 5h3.4v3.4h1.3v1.6h-4.8v-1.6h1.2v-1.8h-1.1z" fill="#fff"/>
</svg>
<span id="t102" class="t " style="left:212px;top:545px;font-size:11px;color:#0000cc;letter-spacing:-0.14px;">PEETE,</span>
<span id="t103" class="t " style="left:196px;top:558px;font-size:11px;color:#0000cc;letter-spacing:0.18px;transform:scaleX(1.0278);transform-origin:0 0;">ALYCE I</span>
<span id="t104" class="t " style="left:283px;top:551px;font-size:11px;color:#0000cc;letter-spacing:0.46px;transform:scaleX(1.0735);transform-origin:0 0;">837140814</span>
<span id="t105" class="t " style="left:353px;top:551px;font-size:11px;color:#000;letter-spacing:-0.29px;">PELL</span>
<span id="t106" class="t " style="left:415px;top:544px;font-size:11px;color:#000;letter-spacing:0.58px;transform:scaleX(1.1173);transform-origin:0 0;">'06-</span>
<span id="t107" class="t " style="left:415px;top:557px;font-size:11px;color:#000;letter-spacing:0.59px;transform:scaleX(1.1015);transform-origin:0 0;">'07</span>
<span id="t108" class="t " style="left:457px;top:551px;font-size:11px;color:#0000cc;letter-spacing:0.40px;transform:scaleX(1.0939);transform-origin:0 0;">1</span>
<span id="t109" class="t " style="left:492px;top:551px;font-size:11px;color:#000;letter-spacing:0.80px;transform:scaleX(1.0808);transform-origin:0 0;">01</span>
<span id="t110" class="t " style="left:523px;top:551px;font-size:11px;color:#000;letter-spacing:0.46px;transform:scaleX(1.0845);transform-origin:0 0;">$1,999.56</span>
<span id="t111" class="t " style="left:587px;top:551px;font-size:11px;color:#000;letter-spacing:0.61px;transform:scaleX(1.1183);transform-origin:0 0;">11/11/2006</span>
<span id="t112" class="t " style="left:660px;top:551px;font-size:11px;color:#000;letter-spacing:0.30px;transform:scaleX(1.0460);transform-origin:0 0;">Review</span>
<div style="position:absolute;left:715px;top:550px;width:69px;height:22px;background:#fff;border:1px solid #7f9db9;box-sizing:border-box;"></div>
<div style="position:absolute;left:767px;top:552px;width:15px;height:18px;border-radius:2px;background:linear-gradient(135deg,#dde8fe 0%,#c2d4fb 60%,#b4c8f6 100%);"></div>
<svg class="a" style="left:770px;top:557px" width="9" height="7"><path d="M1 1.5L4.5 5L8 1.5" stroke="#4d6185" stroke-width="2" fill="none"/></svg>
<div style="position:absolute;left:165px;top:589px;width:13px;height:13px;border:1px solid #1c5180;box-sizing:border-box;background:linear-gradient(135deg,#dcdcd7 0%,#f4f4f0 70%,#fff 100%);"></div>
<svg class="a" style="left:196px;top:582px" width="12" height="12" viewBox="0 0 12 12">
<rect x="0.3" y="0.3" width="11.4" height="11.4" rx="4.6" fill="#7a0a08"/>
<rect x="0.6" y="0.6" width="10.4" height="10.4" rx="4.2" fill="#ff0030"/>
<path d="M2 8.5c-0.8-2.5 0-5 2-6.5" stroke="#ff9020" stroke-width="1" fill="none"/>
<rect x="5" y="2.2" width="2.2" height="1.8" fill="#fff"/><path d="M3.8 5h3.4v3.4h1.3v1.6h-4.8v-1.6h1.2v-1.8h-1.1z" fill="#fff"/>
</svg>
<span id="t113" class="t " style="left:212px;top:580px;font-size:11px;color:#0000cc;letter-spacing:-0.14px;">PEETE,</span>
<span id="t114" class="t " style="left:196px;top:593px;font-size:11px;color:#0000cc;letter-spacing:0.18px;transform:scaleX(1.0278);transform-origin:0 0;">ALYCE I</span>
<span id="t115" class="t " style="left:283px;top:586px;font-size:11px;color:#0000cc;letter-spacing:0.46px;transform:scaleX(1.0735);transform-origin:0 0;">837140814</span>
<span id="t116" class="t " style="left:353px;top:586px;font-size:11px;color:#000;letter-spacing:-0.29px;">PELL</span>
<span id="t117" class="t " style="left:415px;top:579px;font-size:11px;color:#000;letter-spacing:0.58px;transform:scaleX(1.1173);transform-origin:0 0;">'06-</span>
<span id="t118" class="t " style="left:415px;top:592px;font-size:11px;color:#000;letter-spacing:0.59px;transform:scaleX(1.1015);transform-origin:0 0;">'07</span>
<span id="t119" class="t " style="left:457px;top:586px;font-size:11px;color:#0000cc;letter-spacing:0.40px;transform:scaleX(1.0939);transform-origin:0 0;">2</span>
<span id="t120" class="t " style="left:492px;top:586px;font-size:11px;color:#000;letter-spacing:0.80px;transform:scaleX(1.0808);transform-origin:0 0;">01</span>
<span id="t121" class="t " style="left:523px;top:586px;font-size:11px;color:#000;letter-spacing:0.46px;transform:scaleX(1.0845);transform-origin:0 0;">$2,000.44</span>
<span id="t122" class="t " style="left:587px;top:586px;font-size:11px;color:#000;letter-spacing:0.61px;transform:scaleX(1.1183);transform-origin:0 0;">11/11/2006</span>
<span id="t123" class="t " style="left:660px;top:586px;font-size:11px;color:#000;letter-spacing:0.29px;transform:scaleX(1.0463);transform-origin:0 0;">Pending</span>
<svg class="a" style="left:196px;top:616px" width="12" height="12" viewBox="0 0 12 12">
<rect x="0.3" y="0.3" width="11.4" height="11.4" rx="4.6" fill="#7a0a08"/>
<rect x="0.6" y="0.6" width="10.4" height="10.4" rx="4.2" fill="#ff0030"/>
<path d="M2 8.5c-0.8-2.5 0-5 2-6.5" stroke="#ff9020" stroke-width="1" fill="none"/>
<rect x="5" y="2.2" width="2.2" height="1.8" fill="#fff"/><path d="M3.8 5h3.4v3.4h1.3v1.6h-4.8v-1.6h1.2v-1.8h-1.1z" fill="#fff"/>
</svg>
<span id="t124" class="t " style="left:212px;top:614px;font-size:11px;color:#0000cc;letter-spacing:0.17px;transform:scaleX(1.0214);transform-origin:0 0;">CASH,</span>
<span id="t125" class="t " style="left:196px;top:627px;font-size:11px;color:#0000cc;letter-spacing:0.15px;transform:scaleX(1.0207);transform-origin:0 0;">ARDELIA</span>
<span id="t126" class="t " style="left:283px;top:620px;font-size:11px;color:#0000cc;letter-spacing:0.46px;transform:scaleX(1.0735);transform-origin:0 0;">123456806</span>
<span id="t127" class="t " style="left:353px;top:620px;font-size:11px;color:#000;letter-spacing:0.04px;transform:scaleX(1.0043);transform-origin:0 0;">DLPLUS</span>
<span id="t128" class="t " style="left:415px;top:613px;font-size:11px;color:#000;letter-spacing:0.58px;transform:scaleX(1.1173);transform-origin:0 0;">'06-</span>
<span id="t129" class="t " style="left:415px;top:626px;font-size:11px;color:#000;letter-spacing:0.59px;transform:scaleX(1.1015);transform-origin:0 0;">'07</span>
<span id="t130" class="t " style="left:457px;top:620px;font-size:11px;color:#0000cc;letter-spacing:0.40px;transform:scaleX(1.0939);transform-origin:0 0;">2</span>
<span id="t131" class="t " style="left:492px;top:620px;font-size:11px;color:#000;letter-spacing:0.80px;transform:scaleX(1.0808);transform-origin:0 0;">01</span>
<span id="t132" class="t " style="left:523px;top:620px;font-size:11px;color:#000;letter-spacing:0.46px;transform:scaleX(1.0845);transform-origin:0 0;">$1,950.00</span>
<span id="t133" class="t " style="left:587px;top:620px;font-size:11px;color:#000;letter-spacing:0.57px;transform:scaleX(1.1086);transform-origin:0 0;">11/19/2006</span>
<span id="t134" class="t " style="left:660px;top:620px;font-size:11px;color:#000;letter-spacing:0.30px;transform:scaleX(1.0460);transform-origin:0 0;">Review</span>
<div style="position:absolute;left:715px;top:619px;width:69px;height:22px;background:#fff;border:1px solid #7f9db9;box-sizing:border-box;"></div>
<div style="position:absolute;left:767px;top:621px;width:15px;height:18px;border-radius:2px;background:linear-gradient(135deg,#dde8fe 0%,#c2d4fb 60%,#b4c8f6 100%);"></div>
<svg class="a" style="left:770px;top:626px" width="9" height="7"><path d="M1 1.5L4.5 5L8 1.5" stroke="#4d6185" stroke-width="2" fill="none"/></svg>
<svg class="a" style="left:196px;top:651px" width="12" height="12" viewBox="0 0 12 12">
<rect x="0.3" y="0.3" width="11.4" height="11.4" rx="4.6" fill="#7a0a08"/>
<rect x="0.6" y="0.6" width="10.4" height="10.4" rx="4.2" fill="#ff0030"/>
<path d="M2 8.5c-0.8-2.5 0-5 2-6.5" stroke="#ff9020" stroke-width="1" fill="none"/>
<rect x="5" y="2.2" width="2.2" height="1.8" fill="#fff"/><path d="M3.8 5h3.4v3.4h1.3v1.6h-4.8v-1.6h1.2v-1.8h-1.1z" fill="#fff"/>
</svg>
<span id="t135" class="t " style="left:212px;top:649px;font-size:11px;color:#0000cc;letter-spacing:-0.14px;">PEETE,</span>
<span id="t136" class="t " style="left:196px;top:662px;font-size:11px;color:#0000cc;letter-spacing:0.18px;transform:scaleX(1.0278);transform-origin:0 0;">ALYCE I</span>
<span id="t137" class="t " style="left:283px;top:655px;font-size:11px;color:#0000cc;letter-spacing:0.46px;transform:scaleX(1.0735);transform-origin:0 0;">837140814</span>
<span id="t138" class="t " style="left:353px;top:655px;font-size:11px;color:#000;letter-spacing:0.13px;transform:scaleX(1.0152);transform-origin:0 0;">DLSUB</span>
<span id="t139" class="t " style="left:415px;top:648px;font-size:11px;color:#000;letter-spacing:0.58px;transform:scaleX(1.1173);transform-origin:0 0;">'06-</span>
<span id="t140" class="t " style="left:415px;top:661px;font-size:11px;color:#000;letter-spacing:0.59px;transform:scaleX(1.1015);transform-origin:0 0;">'07</span>
<span id="t141" class="t " style="left:457px;top:655px;font-size:11px;color:#0000cc;letter-spacing:0.40px;transform:scaleX(1.0939);transform-origin:0 0;">2</span>
<span id="t142" class="t " style="left:492px;top:655px;font-size:11px;color:#000;letter-spacing:0.80px;transform:scaleX(1.0808);transform-origin:0 0;">01</span>
<span id="t143" class="t " style="left:523px;top:655px;font-size:11px;color:#000;letter-spacing:0.46px;transform:scaleX(1.0845);transform-origin:0 0;">$1,970.00</span>
<span id="t144" class="t " style="left:587px;top:655px;font-size:11px;color:#000;letter-spacing:0.57px;transform:scaleX(1.1086);transform-origin:0 0;">11/19/2006</span>
<span id="t145" class="t " style="left:660px;top:655px;font-size:11px;color:#000;letter-spacing:0.30px;transform:scaleX(1.0460);transform-origin:0 0;">Review</span>
<div style="position:absolute;left:715px;top:654px;width:69px;height:22px;background:#fff;border:1px solid #7f9db9;box-sizing:border-box;"></div>
<div style="position:absolute;left:767px;top:656px;width:15px;height:18px;border-radius:2px;background:linear-gradient(135deg,#dde8fe 0%,#c2d4fb 60%,#b4c8f6 100%);"></div>
<svg class="a" style="left:770px;top:661px" width="9" height="7"><path d="M1 1.5L4.5 5L8 1.5" stroke="#4d6185" stroke-width="2" fill="none"/></svg>
<div style="position:absolute;left:165px;top:693px;width:13px;height:13px;border:1px solid #1c5180;box-sizing:border-box;background:linear-gradient(135deg,#dcdcd7 0%,#f4f4f0 70%,#fff 100%);"></div>
<svg class="a" style="left:196px;top:686px" width="12" height="12" viewBox="0 0 12 12">
<rect x="0.3" y="0.3" width="11.4" height="11.4" rx="4.6" fill="#7a0a08"/>
<rect x="0.6" y="0.6" width="10.4" height="10.4" rx="4.2" fill="#ff0030"/>
<path d="M2 8.5c-0.8-2.5 0-5 2-6.5" stroke="#ff9020" stroke-width="1" fill="none"/>
<rect x="5" y="2.2" width="2.2" height="1.8" fill="#fff"/><path d="M3.8 5h3.4v3.4h1.3v1.6h-4.8v-1.6h1.2v-1.8h-1.1z" fill="#fff"/>
</svg>
<span id="t146" class="t " style="left:212px;top:684px;font-size:11px;color:#0000cc;letter-spacing:0.07px;transform:scaleX(1.0096);transform-origin:0 0;">ORELLANA,</span>
<span id="t147" class="t " style="left:196px;top:697px;font-size:11px;color:#0000cc;letter-spacing:0.11px;transform:scaleX(1.0156);transform-origin:0 0;">ETTIE</span>
<span id="t148" class="t " style="left:283px;top:690px;font-size:11px;color:#0000cc;letter-spacing:0.46px;transform:scaleX(1.0735);transform-origin:0 0;">244212221</span>
<span id="t149" class="t " style="left:353px;top:690px;font-size:11px;color:#000;letter-spacing:0.12px;transform:scaleX(1.0143);transform-origin:0 0;">DLUNSUB</span>
<span id="t150" class="t " style="left:415px;top:683px;font-size:11px;color:#000;letter-spacing:0.58px;transform:scaleX(1.1173);transform-origin:0 0;">'06-</span>
<span id="t151" class="t " style="left:415px;top:696px;font-size:11px;color:#000;letter-spacing:0.59px;transform:scaleX(1.1015);transform-origin:0 0;">'07</span>
<span id="t152" class="t " style="left:457px;top:690px;font-size:11px;color:#0000cc;letter-spacing:0.40px;transform:scaleX(1.0939);transform-origin:0 0;">1</span>
<span id="t153" class="t " style="left:492px;top:690px;font-size:11px;color:#000;letter-spacing:0.80px;transform:scaleX(1.0808);transform-origin:0 0;">01</span>
<span id="t154" class="t " style="left:523px;top:690px;font-size:11px;color:#000;letter-spacing:0.48px;transform:scaleX(1.0809);transform-origin:0 0;">$690.00</span>
<span id="t155" class="t " style="left:587px;top:690px;font-size:11px;color:#000;letter-spacing:0.57px;transform:scaleX(1.1086);transform-origin:0 0;">11/25/2006</span>
<span id="t156" class="t " style="left:660px;top:690px;font-size:11px;color:#000;letter-spacing:0.29px;transform:scaleX(1.0463);transform-origin:0 0;">Pending</span>
<div style="position:absolute;left:165px;top:727px;width:13px;height:13px;border:1px solid #1c5180;box-sizing:border-box;background:linear-gradient(135deg,#dcdcd7 0%,#f4f4f0 70%,#fff 100%);"></div>
<svg class="a" style="left:196px;top:720px" width="12" height="12" viewBox="0 0 12 12">
<rect x="0.3" y="0.3" width="11.4" height="11.4" rx="4.6" fill="#7a0a08"/>
<rect x="0.6" y="0.6" width="10.4" height="10.4" rx="4.2" fill="#ff0030"/>
<path d="M2 8.5c-0.8-2.5 0-5 2-6.5" stroke="#ff9020" stroke-width="1" fill="none"/>
<rect x="5" y="2.2" width="2.2" height="1.8" fill="#fff"/><path d="M3.8 5h3.4v3.4h1.3v1.6h-4.8v-1.6h1.2v-1.8h-1.1z" fill="#fff"/>
</svg>
<span id="t157" class="t " style="left:212px;top:718px;font-size:11px;color:#0000cc;letter-spacing:0.07px;transform:scaleX(1.0096);transform-origin:0 0;">ORELLANA,</span>
<span id="t158" class="t " style="left:196px;top:731px;font-size:11px;color:#0000cc;letter-spacing:0.11px;transform:scaleX(1.0156);transform-origin:0 0;">ETTIE</span>
<span id="t159" class="t " style="left:283px;top:724px;font-size:11px;color:#0000cc;letter-spacing:0.46px;transform:scaleX(1.0735);transform-origin:0 0;">244212221</span>
<span id="t160" class="t " style="left:353px;top:724px;font-size:11px;color:#000;letter-spacing:0.12px;transform:scaleX(1.0143);transform-origin:0 0;">DLUNSUB</span>
<span id="t161" class="t " style="left:415px;top:717px;font-size:11px;color:#000;letter-spacing:0.58px;transform:scaleX(1.1173);transform-origin:0 0;">'06-</span>
<span id="t162" class="t " style="left:415px;top:730px;font-size:11px;color:#000;letter-spacing:0.59px;transform:scaleX(1.1015);transform-origin:0 0;">'07</span>
<span id="t163" class="t " style="left:457px;top:724px;font-size:11px;color:#0000cc;letter-spacing:0.40px;transform:scaleX(1.0939);transform-origin:0 0;">2</span>
<span id="t164" class="t " style="left:492px;top:724px;font-size:11px;color:#000;letter-spacing:0.80px;transform:scaleX(1.0808);transform-origin:0 0;">01</span>
<span id="t165" class="t " style="left:523px;top:724px;font-size:11px;color:#000;letter-spacing:0.48px;transform:scaleX(1.0809);transform-origin:0 0;">$690.00</span>
<span id="t166" class="t " style="left:587px;top:724px;font-size:11px;color:#000;letter-spacing:0.57px;transform:scaleX(1.1086);transform-origin:0 0;">11/26/2006</span>
<span id="t167" class="t " style="left:660px;top:724px;font-size:11px;color:#000;letter-spacing:0.29px;transform:scaleX(1.0463);transform-origin:0 0;">Pending</span>
<span id="t168" class="t " style="left:175px;top:757px;font-size:11px;color:#000;letter-spacing:0.43px;transform:scaleX(1.0929);transform-origin:0 0;">Records 1 to 11 of 11</span>
<span id="t169" class="t " style="left:347px;top:755px;font-size:11px;color:#000;font-weight:bold;letter-spacing:0.39px;transform:scaleX(1.1942);transform-origin:0 0;">Total Disb. Amount:</span>
<span id="t170" class="t " style="left:508px;top:757px;font-size:11px;color:#000;letter-spacing:0.43px;transform:scaleX(1.0788);transform-origin:0 0;">$12,594.44</span>
<span id="t171" class="t " style="left:153px;top:782px;font-size:11px;color:#0000cc;letter-spacing:0.37px;transform:scaleX(1.0829);transform-origin:0 0;">Select All</span>
<span id="t172" class="t " style="left:312px;top:782px;font-size:11px;color:#0000cc;letter-spacing:0.48px;transform:scaleX(1.1081);transform-origin:0 0;">Clear All</span>
<span id="t173" class="t " style="left:642px;top:782px;font-size:11px;color:#0000cc;letter-spacing:0.42px;transform:scaleX(1.0874);transform-origin:0 0;">Accept All</span>
<span id="t174" class="t " style="left:718px;top:782px;font-size:11px;color:#0000cc;letter-spacing:0.44px;transform:scaleX(1.0974);transform-origin:0 0;">Reject All</span>
<div style="position:absolute;left:360px;top:810px;width:220px;height:18px;background:#cc6600;"></div>
<span class="t" style="left:370px;top:812px;font-size:10px;font-weight:bold;color:#fff8e8;letter-spacing:0.98px;transform:scaleX(0.9);transform-origin:0 0">PROCESS SELECTED DISBURSEMENTS</span>
<div style="position:absolute;left:6px;top:836px;width:794px;height:9px;background:#444444;"></div>
<div style="position:absolute;left:310px;top:844px;width:1px;height:1px;background:#fff;"></div>
<div style="position:absolute;left:391px;top:844px;width:1px;height:1px;background:#fff;"></div>
<div style="position:absolute;left:401px;top:844px;width:1px;height:1px;background:#fff;"></div>
<div style="position:absolute;left:540px;top:844px;width:1px;height:1px;background:#fff;"></div>
<div style="position:absolute;left:557px;top:844px;width:1px;height:1px;background:#fff;"></div>
<div style="position:absolute;left:589px;top:844px;width:1px;height:1px;background:#fff;"></div>
<div style="position:absolute;left:649px;top:844px;width:1px;height:1px;background:#fff;"></div>
<div style="position:absolute;left:690px;top:844px;width:1px;height:1px;background:#fff;"></div>
<div style="position:absolute;left:790px;top:844px;width:1px;height:1px;background:#fff;"></div>
<div style="position:absolute;left:793px;top:844px;width:1px;height:1px;background:#fff;"></div>
<div style="position:absolute;left:800px;top:121px;width:17px;height:724px;background:linear-gradient(to right,#eeede5 0,#f3f1ea 1px,#fbfaf6 8px,#f6f4ec 16px);"></div>
<div style="position:absolute;left:801px;top:121px;width:15px;height:17px;box-sizing:border-box;border:1px solid #fff;border-radius:2px;background:linear-gradient(135deg,#cbdafc 0%,#bcd0fa 55%,#b0c8f8 100%);box-shadow:1px 1px 0 #a8bcd8;"></div>
<svg class="a" style="left:804px;top:126px" width="10" height="7"><path d="M1 5.5L5 1.5L9 5.5" stroke="#4d6185" stroke-width="2.2" fill="none"/></svg>
<div style="position:absolute;left:801px;top:828px;width:15px;height:16px;box-sizing:border-box;border:1px solid #fff;border-radius:2px;background:linear-gradient(135deg,#cbdafc 0%,#bcd0fa 55%,#b0c8f8 100%);box-shadow:1px 1px 0 #a8bcd8;"></div>
<svg class="a" style="left:804px;top:833px" width="10" height="7"><path d="M1 1.5L5 5.5L9 1.5" stroke="#4d6185" stroke-width="2.2" fill="none"/></svg>
<div style="position:absolute;left:801px;top:210px;width:15px;height:589px;box-sizing:border-box;border:1px solid #fff;border-radius:2px;background:linear-gradient(to right,#bccef8 0,#c8d8fb 40%,#c4d4fa 60%,#b2c8f8 100%);box-shadow:1px 0 0 #a2b4d2;"></div>
<div style="position:absolute;left:805px;top:500px;width:6px;height:1px;background:#eef3fe;"></div>
<div style="position:absolute;left:806px;top:501px;width:6px;height:1px;background:#8cacf4;"></div>
<div style="position:absolute;left:805px;top:502px;width:6px;height:1px;background:#eef3fe;"></div>
<div style="position:absolute;left:806px;top:503px;width:6px;height:1px;background:#8cacf4;"></div>
<div style="position:absolute;left:805px;top:504px;width:6px;height:1px;background:#eef3fe;"></div>
<div style="position:absolute;left:806px;top:505px;width:6px;height:1px;background:#8cacf4;"></div>
<div style="position:absolute;left:805px;top:506px;width:6px;height:1px;background:#eef3fe;"></div>
<div style="position:absolute;left:806px;top:507px;width:6px;height:1px;background:#8cacf4;"></div>
<div style="position:absolute;left:6px;top:845px;width:794px;height:17px;background:linear-gradient(to bottom,#eeede5 0,#f3f1ea 1px,#fbfaf6 8px,#f6f4ec 16px);"></div>
<div style="position:absolute;left:6px;top:846px;width:16px;height:15px;box-sizing:border-box;border:1px solid #fff;border-radius:2px;background:linear-gradient(135deg,#cbdafc 0%,#bcd0fa 55%,#b0c8f8 100%);box-shadow:1px 1px 0 #a8bcd8;"></div>
<svg class="a" style="left:11px;top:849px" width="7" height="10"><path d="M5.5 1L1.5 5L5.5 9" stroke="#4d6185" stroke-width="2.2" fill="none"/></svg>
<div style="position:absolute;left:784px;top:846px;width:15px;height:15px;box-sizing:border-box;border:1px solid #fff;border-radius:2px;background:linear-gradient(135deg,#cbdafc 0%,#bcd0fa 55%,#b0c8f8 100%);box-shadow:1px 1px 0 #a8bcd8;"></div>
<svg class="a" style="left:789px;top:849px" width="7" height="10"><path d="M1.5 1L5.5 5L1.5 9" stroke="#4d6185" stroke-width="2.2" fill="none"/></svg>
<div style="position:absolute;left:70px;top:846px;width:698px;height:15px;box-sizing:border-box;border:1px solid #fff;border-radius:2px;background:linear-gradient(to bottom,#bccef8 0,#c8d8fb 40%,#c4d4fa 60%,#b2c8f8 100%);box-shadow:0 1px 0 #a2b4d2;"></div>
<div style="position:absolute;left:415px;top:850px;width:1px;height:6px;background:#eef3fe;"></div>
<div style="position:absolute;left:416px;top:851px;width:1px;height:6px;background:#8cacf4;"></div>
<div style="position:absolute;left:417px;top:850px;width:1px;height:6px;background:#eef3fe;"></div>
<div style="position:absolute;left:418px;top:851px;width:1px;height:6px;background:#8cacf4;"></div>
<div style="position:absolute;left:419px;top:850px;width:1px;height:6px;background:#eef3fe;"></div>
<div style="position:absolute;left:420px;top:851px;width:1px;height:6px;background:#8cacf4;"></div>
<div style="position:absolute;left:421px;top:850px;width:1px;height:6px;background:#eef3fe;"></div>
<div style="position:absolute;left:422px;top:851px;width:1px;height:6px;background:#8cacf4;"></div>
<div style="position:absolute;left:800px;top:845px;width:17px;height:17px;background:#ece9d8;"></div>
<div style="position:absolute;left:4px;top:864px;width:815px;height:23px;background:#ece9d8;"></div>
<div style="position:absolute;left:543px;top:868px;width:1px;height:17px;background:#c0bcac;"></div>
<div style="position:absolute;left:544px;top:868px;width:1px;height:17px;background:#fff;"></div>
<div style="position:absolute;left:567px;top:868px;width:1px;height:17px;background:#c0bcac;"></div>
<div style="position:absolute;left:568px;top:868px;width:1px;height:17px;background:#fff;"></div>
<div style="position:absolute;left:591px;top:868px;width:1px;height:17px;background:#c0bcac;"></div>
<div style="position:absolute;left:592px;top:868px;width:1px;height:17px;background:#fff;"></div>
<div style="position:absolute;left:615px;top:868px;width:1px;height:17px;background:#c0bcac;"></div>
<div style="position:absolute;left:616px;top:868px;width:1px;height:17px;background:#fff;"></div>
<div style="position:absolute;left:639px;top:868px;width:1px;height:17px;background:#c0bcac;"></div>
<div style="position:absolute;left:640px;top:868px;width:1px;height:17px;background:#fff;"></div>
<div style="position:absolute;left:663px;top:868px;width:1px;height:17px;background:#c0bcac;"></div>
<div style="position:absolute;left:664px;top:868px;width:1px;height:17px;background:#fff;"></div>
<div style="position:absolute;left:4px;top:886px;width:815px;height:1px;background:#f4eed8;"></div>
<svg class="a" style="left:5px;top:867px" width="17" height="17" viewBox="0 0 17 17">
<path d="M4.5 1.5h8.5l2.5 2.5v12h-11z" fill="#dde6f8" stroke="#5a5a90" stroke-width="1"/>
<path d="M13 1.5v2.5h2.5" fill="#b8d0f8" stroke="#5a5a90" stroke-width="0.8"/>
<path d="M2.8 9.2H11.2A4.2 3.9 0 1 0 10 11.9" fill="none" stroke="#1a78e0" stroke-width="2.3"/>
<path d="M0.8 15.5c2.5-5 8-10 13-12" stroke="#38a8f0" stroke-width="1" fill="none" stroke-dasharray="1.5 0.8"/>
</svg>
<div style="position:absolute;left:4px;top:864px;width:815px;height:1px;background:#9c9a88;"></div>
<div style="position:absolute;left:4px;top:865px;width:815px;height:2px;background:linear-gradient(to bottom,#d8d4c4,#e8e5d6);"></div>
<svg class="a" style="left:664px;top:864px" width="24" height="24" viewBox="664 864 24 24">
<defs><linearGradient id="gsc" x1="0" y1="0" x2="0.6" y2="1"><stop offset="0" stop-color="#c8f8ff"/><stop offset="1" stop-color="#3890f0"/></linearGradient></defs>
<path d="M672.5 869l9-1.5l1 10l-9 2z" fill="url(#gsc)" stroke="#7a6ab0" stroke-width="0.8"/>
<ellipse cx="677.5" cy="881.5" rx="5" ry="2.5" fill="#e8e8f4" stroke="#8a80b8" stroke-width="0.8"/>
<path d="M678 878.5l3-0.5l-0.5 4.5l-2.5 0.5z" fill="#5a58b8"/>
</svg>
<span id="t175" class="t " style="left:689px;top:867px;font-size:11px;color:#000;letter-spacing:-0.25px;">My Computer</span>
<div style="position:absolute;left:816px;top:876px;width:2px;height:2px;background:#fff;"></div>
<div style="position:absolute;left:815px;top:875px;width:2px;height:2px;background:#b0ac98;"></div>
<div style="position:absolute;left:812px;top:880px;width:2px;height:2px;background:#fff;"></div>
<div style="position:absolute;left:811px;top:879px;width:2px;height:2px;background:#b0ac98;"></div>
<div style="position:absolute;left:816px;top:880px;width:2px;height:2px;background:#fff;"></div>
<div style="position:absolute;left:815px;top:879px;width:2px;height:2px;background:#b0ac98;"></div>
<div style="position:absolute;left:808px;top:884px;width:2px;height:2px;background:#fff;"></div>
<div style="position:absolute;left:807px;top:883px;width:2px;height:2px;background:#b0ac98;"></div>
<div style="position:absolute;left:812px;top:884px;width:2px;height:2px;background:#fff;"></div>
<div style="position:absolute;left:811px;top:883px;width:2px;height:2px;background:#b0ac98;"></div>
<div style="position:absolute;left:816px;top:884px;width:2px;height:2px;background:#fff;"></div>
<div style="position:absolute;left:815px;top:883px;width:2px;height:2px;background:#b0ac98;"></div>
</body></html>
